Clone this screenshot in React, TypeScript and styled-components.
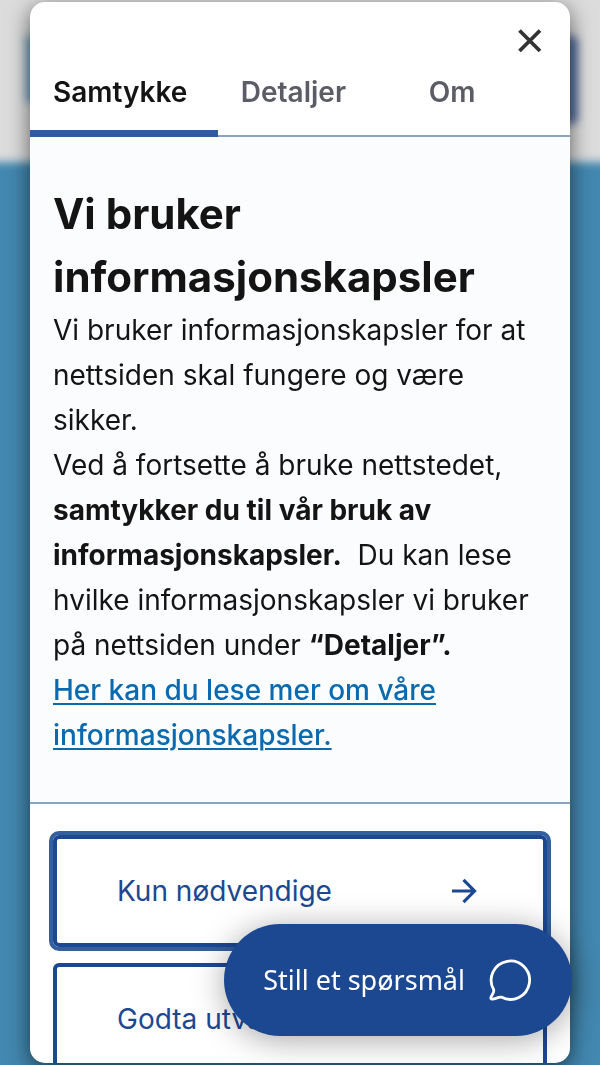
import React, { useState } from "react";
import styled, { createGlobalStyle } from "styled-components";

const sans = `Inter, "Liberation Sans", sans-serif`;
const navy = "#1c4891";

const GlobalStyle = createGlobalStyle`
  *, *::before, *::after { box-sizing: border-box; }
  body {
    margin: 0;
    font-family: ${sans};
    color: #141414;
    background: #4388b0;
  }
  button { font: inherit; cursor: pointer; }
`;

const Backdrop = styled.div`
  min-height: 100vh;
  overflow: hidden;
  background: #4388b0;
`;

const SiteHeader = styled.div`
  display: flex;
  justify-content: space-between;
  align-items: flex-start;
  height: 178px;
  margin: -16px -16px 0;
  padding: 52px 38px 0 42px;
  background: #dcdcdc;
  filter: blur(4px);
`;

const SiteLogo = styled.div`
  width: 80px;
  height: 66px;
  background: #6f9fbd;
`;

const SiteMenu = styled.div`
  width: 120px;
  height: 88px;
  border-radius: 6px;
  background: #5570a0;
`;

const Overlay = styled.div`
  position: fixed;
  inset: 0;
  display: flex;
  padding: 2px 30px;
`;

const Dialog = styled.section`
  display: flex;
  flex-direction: column;
  flex: 1;
  min-width: 0;
  overflow: hidden;
  border-radius: 15px;
  background: #fff;
  box-shadow: 0 6px 22px rgba(0, 0, 0, 0.6);
`;

const DialogTop = styled.header`
  display: flex;
  flex: none;
  justify-content: flex-end;
  padding: 23px 24px 0;
`;

const CloseButton = styled.button`
  display: flex;
  padding: 0;
  border: 0;
  background: none;
  color: #333;
`;

const Tabs = styled.div`
  display: grid;
  grid-template-columns: 8fr 8fr 7fr;
  flex: none;
  box-shadow: inset 0 -2px #8ba3c5;
`;

const Tab = styled.button<{ $active: boolean }>`
  height: 80px;
  padding: 0 23px 4px;
  border: 0;
  border-bottom: 7px solid ${(p) => (p.$active ? "#2f5c9e" : "transparent")};
  background: none;
  color: ${(p) => (p.$active ? "#141414" : "#5b5c66")};
  font-size: 28px;
  font-weight: 600;
  line-height: 36px;
  text-align: left;
`;

const Content = styled.div`
  flex: none;
  padding: 45px 23px 44px;
  background: #fbfcfe;
`;

const Title = styled.h1`
  margin: 0;
  font-size: 42px;
  font-weight: 700;
  line-height: 63px;
`;

const Text = styled.p`
  margin: 0;
  font-size: 28px;
  line-height: 45px;
`;

const Link = styled.a`
  color: #0a6ab0;
  font-weight: 500;
  text-decoration-thickness: 2px;
  text-underline-offset: 3px;
`;

const Actions = styled.footer`
  display: flex;
  flex-direction: column;
  flex: 1;
  gap: 16px;
  min-height: 200px;
  overflow: hidden;
  padding: 31px 23px 0;
  border-top: 2px solid #8ba3c5;
`;

const ActionButton = styled.button<{ $focused?: boolean }>`
  display: flex;
  flex: none;
  align-items: center;
  justify-content: space-between;
  height: 112px;
  padding: 0 66px 0 60px;
  border: 4px solid ${navy};
  border-radius: 6px;
  outline: ${(p) => (p.$focused ? "4px solid #335f9f" : "none")};
  background: #fff;
  color: ${navy};
  font-size: 28px;
  line-height: 36px;
`;

const ChatButton = styled.button`
  position: fixed;
  right: 28px;
  bottom: 29px;
  display: flex;
  align-items: center;
  gap: 24px;
  height: 112px;
  padding: 0 41px 0 39px;
  border: 0;
  border-radius: 56px;
  background: ${navy};
  box-shadow: 0 4px 32px rgba(0, 0, 0, 0.35);
  color: #fff;
`;

const ChatLabel = styled.span`
  font-family: "Noto Sans", sans-serif;
  font-size: 27px;
  line-height: 36px;
  white-space: nowrap;
`;

const CloseIcon = () => (
  <svg width="32" height="32" viewBox="0 0 32 32" fill="none" stroke="currentColor" strokeWidth="3.8" aria-hidden="true">
    <path d="M5.5 5.5 26 26M26 5.5 5.5 26" />
  </svg>
);

const ArrowIcon = () => (
  <svg width="26" height="26" viewBox="0 0 26 26" fill="none" stroke="currentColor" strokeWidth="3.2" aria-hidden="true">
    <path d="M1 13H23.5M12.5 1.8 23.5 13 12.5 24.2" />
  </svg>
);

const ChatIcon = () => (
  <svg width="42" height="42" viewBox="0 0 42 42" fill="none" stroke="currentColor" strokeWidth="2.8" strokeLinejoin="round" strokeLinecap="round" aria-hidden="true">
    <path d="M4.6 30.5A19.2 19.2 0 1 1 12.3 38.1C8.700 37.800 6.500 40.300 2.900 40.100C1.600 40 1.700 38.800 2.100 37.800C3 35.300 5.700 33.300 4.600 30.500Z" />
  </svg>
);

const tabNames = ["Samtykke", "Detaljer", "Om"];

export default function App() {
  const [active, setActive] = useState(0);

  return (
    <>
      <GlobalStyle />
      <Backdrop aria-hidden="true">
        <SiteHeader>
          <SiteLogo />
          <SiteMenu />
        </SiteHeader>
      </Backdrop>
      <Overlay>
        <Dialog role="dialog" aria-modal="true" aria-labelledby="consent-title">
          <DialogTop>
            <CloseButton type="button" aria-label="Lukk">
              <CloseIcon />
            </CloseButton>
          </DialogTop>
          <Tabs role="tablist">
            {tabNames.map((name, i) => (
              <Tab key={name} type="button" role="tab" aria-selected={i === active} $active={i === active} onClick={() => setActive(i)}>
                {name}
              </Tab>
            ))}
          </Tabs>
          <Content role="tabpanel">
            <Title id="consent-title">Vi bruker informasjonskapsler</Title>
            <Text>Vi bruker informasjonskapsler for at nettsiden skal fungere og være sikker.</Text>
            <Text>
              Ved å fortsette å bruke nettstedet, <b>samtykker du til vår bruk av informasjonskapsler.</b>
              &nbsp; Du kan lese hvilke informasjonskapsler vi bruker på nettsiden under <b>“Detaljer”.</b>
            </Text>
            <Text>
              <Link href="#informasjonskapsler">Her kan du lese mer om våre informasjonskapsler.</Link>
            </Text>
          </Content>
          <Actions>
            <ActionButton type="button" $focused>
              Kun nødvendige
              <ArrowIcon />
            </ActionButton>
            <ActionButton type="button">
              Godta utvalgte
              <ArrowIcon />
            </ActionButton>
          </Actions>
        </Dialog>
      </Overlay>
      <ChatButton type="button">
        <ChatLabel>Still et spørsmål</ChatLabel>
        <ChatIcon />
      </ChatButton>
    </>
  );
}
